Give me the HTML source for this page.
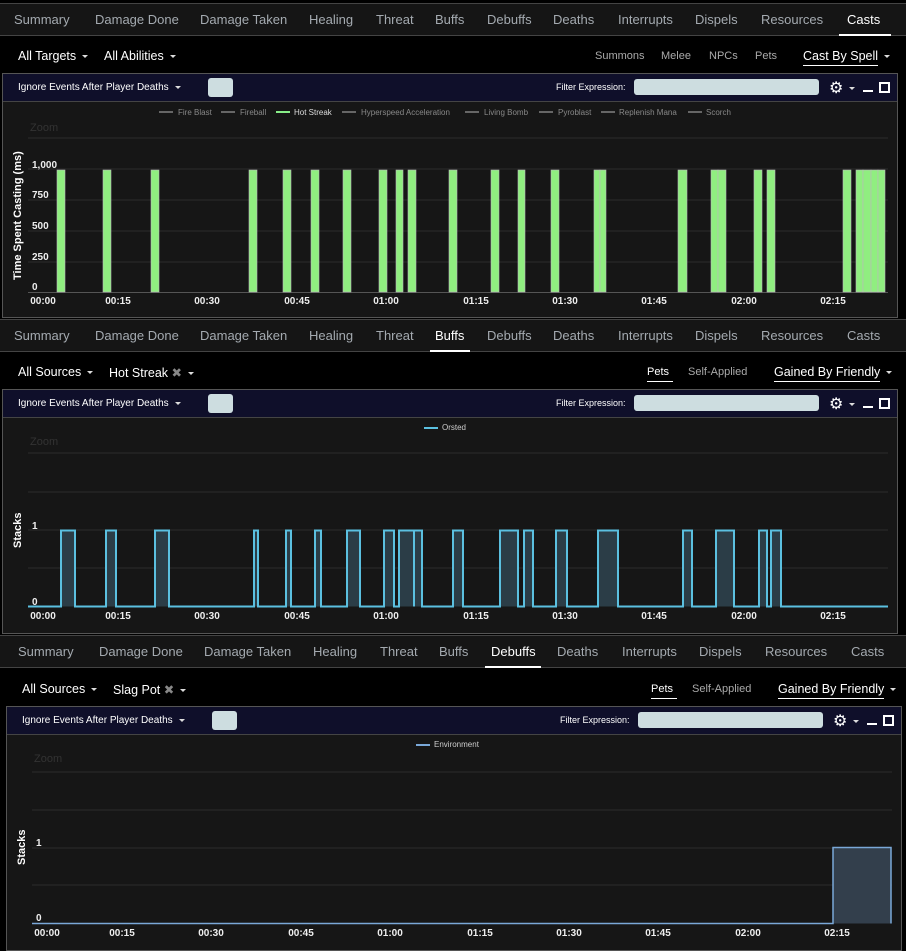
<!DOCTYPE html>
<html><head><meta charset="utf-8"><style>
*{margin:0;padding:0;box-sizing:border-box}
body{width:906px;height:946px;background:#000;font-family:"Liberation Sans",sans-serif;position:relative;overflow:hidden;color:#fff}
.tabs{position:absolute;left:0;width:906px;height:33px;background:#151515;border-top:1px solid #444;border-bottom:1px solid #444}
.tabs span{position:absolute;top:8px;font-size:13px;color:#a4aab0}
.tabs span.a{color:#fff}
.tabs i{position:absolute;bottom:-1px;height:2px;background:#fff}
.ctl{position:absolute;font-size:12.5px;color:#fff}
.sm{font-size:11px;color:#aaa}
.car{display:inline-block;width:0;height:0;border-left:3px solid transparent;border-right:3px solid transparent;border-top:3px solid #ddd;vertical-align:middle;margin-left:6px}
.panel{position:absolute;background:#161616;border:1px solid #555}
.ph{position:absolute;left:0;top:0;right:0;height:28px;background:#0f0f2a;border-bottom:1px solid #444}
.ph .t{position:absolute;left:15px;top:8px;font-size:10px;color:#fff}
.ph .sw{position:absolute;left:200px;top:4px;width:25px;height:19px;background:#cddde0;border-radius:3px}
.ph .fe{position:absolute;top:8px;font-size:9px;color:#fff}
.ph .in{position:absolute;top:5px;height:16px;background:#cddde0;border-radius:3px}
.ph .g{position:absolute;top:4px;font-size:16px;color:#fff}
.ph .mn{position:absolute;top:16px;width:10px;height:2px;background:#fff}
.ph .mx{position:absolute;top:8px;width:11px;height:11px;border:2px solid #fff}
svg{position:absolute;left:0;top:0}
svg text{font-family:"Liberation Sans",sans-serif}
</style></head><body>

<!-- Section 1 -->
<div class="tabs" style="top:3px">
<span style="left:14px">Summary</span><span style="left:95px">Damage Done</span><span style="left:200px">Damage Taken</span><span style="left:309px">Healing</span><span style="left:376px">Threat</span><span style="left:435px">Buffs</span><span style="left:487px">Debuffs</span><span style="left:553px">Deaths</span><span style="left:618px">Interrupts</span><span style="left:695px">Dispels</span><span style="left:761px">Resources</span><span class="a" style="left:847px">Casts</span>
<i style="left:839px;width:52px"></i></div>
<div class="ctl" style="left:18px;top:49px">All Targets<span class="car"></span></div>
<div class="ctl" style="left:104px;top:49px">All Abilities<span class="car"></span></div>
<div class="ctl sm" style="left:595px;top:50px">Summons</div>
<div class="ctl sm" style="left:661px;top:50px">Melee</div>
<div class="ctl sm" style="left:709px;top:50px">NPCs</div>
<div class="ctl sm" style="left:755px;top:50px">Pets</div>
<div class="ctl" style="left:803px;top:49px"><span style="border-bottom:1px solid #fff;padding-bottom:2px">Cast By Spell</span><span class="car"></span></div>
<div class="panel" style="left:2px;top:73px;width:896px;height:245px">
<div class="ph"><span class="t">Ignore Events After Player Deaths<span class="car"></span></span><span class="sw" style="left:205px"></span><span class="fe" style="left:553px">Filter Expression:</span><span class="in" style="left:631px;width:185px"></span><span class="g" style="left:826px">⚙<span class="car"></span></span><span class="mn" style="left:860px"></span><span class="mx" style="left:876px"></span></div>
</div>
<svg width="906" height="320">
<g font-size="8" fill="#888">
<line x1="159" y1="112" x2="173" y2="112" stroke="#666" stroke-width="2"/><text x="178" y="115">Fire Blast</text>
<line x1="221" y1="112" x2="235" y2="112" stroke="#666" stroke-width="2"/><text x="240" y="115">Fireball</text>
<line x1="276" y1="112" x2="290" y2="112" stroke="#8e8" stroke-width="2"/><text x="294" y="115" fill="#ddd">Hot Streak</text>
<line x1="342" y1="112" x2="356" y2="112" stroke="#666" stroke-width="2"/><text x="361" y="115">Hyperspeed Acceleration</text>
<line x1="465" y1="112" x2="479" y2="112" stroke="#666" stroke-width="2"/><text x="484" y="115">Living Bomb</text>
<line x1="539" y1="112" x2="553" y2="112" stroke="#666" stroke-width="2"/><text x="558" y="115">Pyroblast</text>
<line x1="601" y1="112" x2="615" y2="112" stroke="#666" stroke-width="2"/><text x="619" y="115">Replenish Mana</text>
<line x1="688" y1="112" x2="702" y2="112" stroke="#666" stroke-width="2"/><text x="706" y="115">Scorch</text>
</g>
<text x="30" y="131" font-size="11" fill="#333">Zoom</text>
<g stroke="#2c2c2c"><line x1="28" y1="138" x2="888" y2="138"/><line x1="28" y1="169" x2="888" y2="169"/><line x1="28" y1="200" x2="888" y2="200"/><line x1="28" y1="231" x2="888" y2="231"/><line x1="28" y1="262" x2="888" y2="262"/></g>
<line x1="28" y1="292.5" x2="888" y2="292.5" stroke="#555"/>
<g font-size="10" fill="#eee" font-weight="bold"><text x="32" y="168">1,000</text><text x="32" y="198">750</text><text x="32" y="229">500</text><text x="32" y="260">250</text><text x="32" y="290">0</text></g>
<text transform="translate(21,280) rotate(-90)" font-size="11" font-weight="bold" fill="#fff">Time Spent Casting (ms)</text>
<g fill="#90ee80" stroke="#bbb" stroke-width="0.6">
<rect x="57" y="170" width="8" height="122"/><rect x="103" y="170" width="8" height="122"/><rect x="151" y="170" width="8" height="122"/><rect x="249" y="170" width="8" height="122"/><rect x="283" y="170" width="8" height="122"/><rect x="311" y="170" width="8" height="122"/><rect x="343" y="170" width="8" height="122"/><rect x="379" y="170" width="8" height="122"/><rect x="396" y="170" width="7" height="122"/><rect x="408" y="170" width="8" height="122"/><rect x="449" y="170" width="8" height="122"/><rect x="491" y="170" width="8" height="122"/><rect x="518" y="170" width="7" height="122"/><rect x="551" y="170" width="8" height="122"/><rect x="594" y="170" width="6" height="122"/><rect x="600" y="170" width="6" height="122"/><rect x="678" y="170" width="9" height="122"/><rect x="711" y="170" width="7" height="122"/><rect x="718" y="170" width="8" height="122"/><rect x="754" y="170" width="8" height="122"/><rect x="767" y="170" width="8" height="122"/><rect x="843" y="170" width="8" height="122"/><rect x="856" y="170" width="7" height="122"/><rect x="863" y="170" width="8" height="122"/><rect x="871" y="170" width="7" height="122"/><rect x="878" y="170" width="7" height="122"/>
</g>
<g font-size="10" fill="#eee" font-weight="bold" text-anchor="middle"><text x="43" y="304">00:00</text><text x="118" y="304">00:15</text><text x="207" y="304">00:30</text><text x="297" y="304">00:45</text><text x="386" y="304">01:00</text><text x="476" y="304">01:15</text><text x="565" y="304">01:30</text><text x="654" y="304">01:45</text><text x="744" y="304">02:00</text><text x="833" y="304">02:15</text></g>
</svg>

<!-- Section 2 -->
<div class="tabs" style="top:319px">
<span style="left:14px">Summary</span><span style="left:95px">Damage Done</span><span style="left:200px">Damage Taken</span><span style="left:309px">Healing</span><span style="left:376px">Threat</span><span class="a" style="left:435px">Buffs</span><span style="left:487px">Debuffs</span><span style="left:553px">Deaths</span><span style="left:618px">Interrupts</span><span style="left:695px">Dispels</span><span style="left:761px">Resources</span><span style="left:847px">Casts</span>
<i style="left:430px;width:40px"></i></div>
<div class="ctl" style="left:18px;top:365px">All Sources<span class="car"></span></div>
<div class="ctl" style="left:109px;top:365px">Hot Streak <span style="color:#888">✖</span><span class="car"></span></div>
<div class="ctl sm" style="left:647px;top:366px;color:#fff;border-bottom:1px solid #fff;padding:0 4px 3px 0">Pets</div>
<div class="ctl sm" style="left:688px;top:366px">Self-Applied</div>
<div class="ctl" style="left:774px;top:365px"><span style="border-bottom:1px solid #fff;padding-bottom:2px">Gained By Friendly</span><span class="car"></span></div>
<div class="panel" style="left:2px;top:389px;width:896px;height:245px">
<div class="ph"><span class="t">Ignore Events After Player Deaths<span class="car"></span></span><span class="sw" style="left:205px"></span><span class="fe" style="left:553px">Filter Expression:</span><span class="in" style="left:631px;width:185px"></span><span class="g" style="left:826px">⚙<span class="car"></span></span><span class="mn" style="left:860px"></span><span class="mx" style="left:876px"></span></div>
</div>
<svg width="906" height="640">
<line x1="424" y1="428" x2="438" y2="428" stroke="#5bc0e0" stroke-width="2"/><text x="442" y="430" font-size="8" fill="#ccc">Orsted</text>
<text x="30" y="445" font-size="11" fill="#333">Zoom</text>
<g stroke="#2c2c2c"><line x1="28" y1="453" x2="888" y2="453"/><line x1="28" y1="492" x2="888" y2="492"/><line x1="28" y1="530" x2="888" y2="530"/><line x1="28" y1="568" x2="888" y2="568"/></g>
<g font-size="10" fill="#eee" font-weight="bold"><text x="32" y="529">1</text><text x="32" y="605">0</text></g>
<text transform="translate(21,548) rotate(-90)" font-size="11" font-weight="bold" fill="#fff">Stacks</text>
<path d="M28 606.5H61V530.5H75V606.5H106V530.5H116V606.5H155V530.5H169V606.5H254V530.5H258V606.5H286V530.5H291V606.5H315V530.5H321V606.5H347V530.5H360V606.5H384V530.5H394V606.5H399V530.5H414V606.5H414V530.5H422V606.5H453V530.5H463V606.5H500V530.5H518V606.5H524V530.5H533V606.5H556V530.5H567V606.5H598V530.5H618V606.5H683V530.5H692V606.5H716V530.5H734V606.5H759V530.5H767V606.5H771V530.5H781V606.5H888" fill="#2b3d47" stroke="#5bc0e0" stroke-width="2"/>
<g font-size="10" fill="#eee" font-weight="bold" text-anchor="middle"><text x="43" y="619">00:00</text><text x="118" y="619">00:15</text><text x="207" y="619">00:30</text><text x="297" y="619">00:45</text><text x="386" y="619">01:00</text><text x="476" y="619">01:15</text><text x="565" y="619">01:30</text><text x="654" y="619">01:45</text><text x="744" y="619">02:00</text><text x="833" y="619">02:15</text></g>
</svg>

<!-- Section 3 -->
<div class="tabs" style="top:635px">
<span style="left:18px">Summary</span><span style="left:99px">Damage Done</span><span style="left:204px">Damage Taken</span><span style="left:313px">Healing</span><span style="left:380px">Threat</span><span style="left:439px">Buffs</span><span class="a" style="left:491px">Debuffs</span><span style="left:557px">Deaths</span><span style="left:622px">Interrupts</span><span style="left:699px">Dispels</span><span style="left:765px">Resources</span><span style="left:851px">Casts</span>
<i style="left:485px;width:56px"></i></div>
<div class="ctl" style="left:22px;top:682px">All Sources<span class="car"></span></div>
<div class="ctl" style="left:113px;top:682px">Slag Pot <span style="color:#888">✖</span><span class="car"></span></div>
<div class="ctl sm" style="left:651px;top:683px;color:#fff;border-bottom:1px solid #fff;padding:0 4px 3px 0">Pets</div>
<div class="ctl sm" style="left:692px;top:683px">Self-Applied</div>
<div class="ctl" style="left:778px;top:682px"><span style="border-bottom:1px solid #fff;padding-bottom:2px">Gained By Friendly</span><span class="car"></span></div>
<div class="panel" style="left:6px;top:706px;width:896px;height:245px">
<div class="ph"><span class="t">Ignore Events After Player Deaths<span class="car"></span></span><span class="sw" style="left:205px"></span><span class="fe" style="left:553px">Filter Expression:</span><span class="in" style="left:631px;width:185px"></span><span class="g" style="left:826px">⚙<span class="car"></span></span><span class="mn" style="left:860px"></span><span class="mx" style="left:876px"></span></div>
</div>
<svg width="906" height="946">
<line x1="416" y1="745" x2="430" y2="745" stroke="#7aa8d8" stroke-width="2"/><text x="434" y="747" font-size="8" fill="#ccc">Environment</text>
<text x="34" y="762" font-size="11" fill="#333">Zoom</text>
<g stroke="#2c2c2c"><line x1="32" y1="772" x2="892" y2="772"/><line x1="32" y1="810" x2="892" y2="810"/><line x1="32" y1="848" x2="892" y2="848"/><line x1="32" y1="885" x2="892" y2="885"/></g>
<g font-size="10" fill="#eee" font-weight="bold"><text x="36" y="846">1</text><text x="36" y="921">0</text></g>
<text transform="translate(25,865) rotate(-90)" font-size="11" font-weight="bold" fill="#fff">Stacks</text>
<path d="M32 923.5H833V847.5H891V923.5" fill="#333f4c" stroke="#7aa8d8" stroke-width="1.5"/>
<g font-size="10" fill="#eee" font-weight="bold" text-anchor="middle"><text x="47" y="936">00:00</text><text x="122" y="936">00:15</text><text x="211" y="936">00:30</text><text x="301" y="936">00:45</text><text x="390" y="936">01:00</text><text x="480" y="936">01:15</text><text x="569" y="936">01:30</text><text x="658" y="936">01:45</text><text x="748" y="936">02:00</text><text x="837" y="936">02:15</text></g>
</svg>
</body></html>
